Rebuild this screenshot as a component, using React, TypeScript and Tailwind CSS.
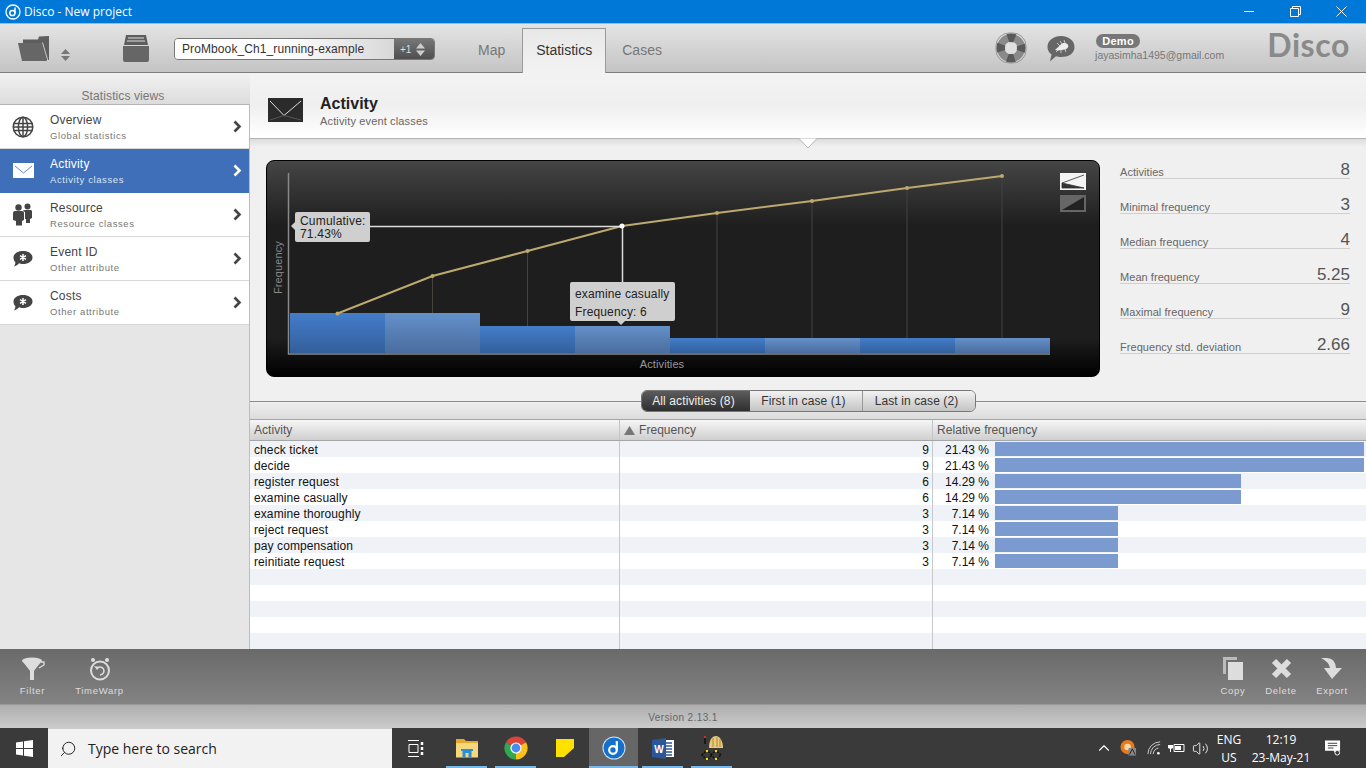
import { Search, ChevronUp, Volume2 } from "lucide-react"

const activities = [
  { name: "check ticket", freq: 9, pct: "21.43 %", bar: 369 },
  { name: "decide", freq: 9, pct: "21.43 %", bar: 369 },
  { name: "register request", freq: 6, pct: "14.29 %", bar: 246 },
  { name: "examine casually", freq: 6, pct: "14.29 %", bar: 246 },
  { name: "examine thoroughly", freq: 3, pct: "7.14 %", bar: 123 },
  { name: "reject request", freq: 3, pct: "7.14 %", bar: 123 },
  { name: "pay compensation", freq: 3, pct: "7.14 %", bar: 123 },
  { name: "reinitiate request", freq: 3, pct: "7.14 %", bar: 123 },
]

const stats = [
  ["Activities", "8"],
  ["Minimal frequency", "3"],
  ["Median frequency", "4"],
  ["Mean frequency", "5.25"],
  ["Maximal frequency", "9"],
  ["Frequency std. deviation", "2.66"],
]

const points = [
  [71.5, 153.5],
  [166.5, 116],
  [261.5, 91],
  [356, 66],
  [451, 53],
  [546, 41],
  [641, 28],
  [736, 16],
]

const bars = [
  [24, 153],
  [119, 153],
  [214, 166],
  [309, 166],
  [404, 178],
  [499, 178],
  [594, 178],
  [689, 178],
]

function DiscoLogo({ size = 16 }: { size?: number }) {
  return (
    <svg width={size} height={size} viewBox="0 0 16 16">
      <circle cx="8" cy="8" r="7" fill="none" stroke="currentColor" strokeWidth="1.3" />
      <circle cx="7.4" cy="9" r="2.6" fill="none" stroke="currentColor" strokeWidth="1.5" />
      <path d="M10 9V3.5" stroke="currentColor" strokeWidth="1.5" fill="none" />
    </svg>
  )
}

function Chevron({ color }: { color: string }) {
  return (
    <svg width="9" height="13" viewBox="0 0 9 13">
      <path d="M1.5 1.5L6.5 6.5L1.5 11.5" fill="none" stroke={color} strokeWidth="2.6" />
    </svg>
  )
}

function GlobeIcon() {
  return (
    <svg width="22" height="22" viewBox="0 0 22 22" fill="none" stroke="#444" strokeWidth="1.5">
      <circle cx="11" cy="11" r="9.8" />
      <ellipse cx="11" cy="11" rx="4.6" ry="9.8" />
      <path d="M11 1V21M1.5 7.5H20.5M1.5 14.5H20.5M1 11H21" />
    </svg>
  )
}

function MailIcon({ bg, line }: { bg: string; line: string }) {
  return (
    <svg width="21" height="15" viewBox="0 0 21 15">
      <rect width="21" height="15" fill={bg} />
      <path d="M2 3L10.5 10L19 3" fill="none" stroke={line} strokeWidth="0.8" />
    </svg>
  )
}

function PeopleIcon() {
  return (
    <svg width="20" height="23" viewBox="0 0 20 23" fill="#444">
      <circle cx="14.5" cy="3.5" r="3" />
      <path d="M10 8Q10 7 12 7H17Q19 7 19 8V15L17 16V20H13V16H12V9Z" />
      <circle cx="5.5" cy="4.5" r="3.2" />
      <path d="M0 10Q0 8 2 8H9Q11 8 11 10V17L9 18V22.5H3V18L0 17Z" />
    </svg>
  )
}

function BubbleIcon() {
  return (
    <svg width="20" height="18" viewBox="0 0 20 18">
      <path d="M10 1C15 1 19.5 3.5 19.5 7.5S15 14 10 14C8.5 14 7 13.7 6 13.3C4.5 15 3 16 .8 16.5C2 15 2.4 13.8 2.4 12C1 11 .5 9.3 .5 7.5C.5 3.5 5 1 10 1Z" fill="#444" />
      <path d="M10 4V11M7 5.7L13 9.3M13 5.7L7 9.3" stroke="#fff" strokeWidth="1.5" />
    </svg>
  )
}

function NavItem({
  title,
  sub,
  icon,
  active,
}: {
  title: string
  sub: string
  icon: React.ReactNode
  active?: boolean
}) {
  return (
    <div
      className={`h-[44px] flex items-center border-b ${
        active ? "bg-[#3e6fb8] border-[#3e6fb8]" : "bg-white border-[#d8d8d8]"
      }`}
    >
      <div className="w-[45px] pl-[1px] flex justify-center">{icon}</div>
      <div className="flex-1 pl-[5px] pt-[1px]">
        <div className={`text-[12px] leading-[15px] tracking-[0.2px] ${active ? "text-white" : "text-[#444]"}`}>{title}</div>
        <div className={`text-[9.5px] leading-[13px] mt-[1px] tracking-[0.6px] ${active ? "text-[#dbe6f5]" : "text-[#777]"}`}>{sub}</div>
      </div>
      <div className="pr-[7px]">
        <Chevron color={active ? "#fff" : "#444"} />
      </div>
    </div>
  )
}

function ToolButton({ label, icon, width }: { label: string; icon: React.ReactNode; width: string }) {
  return (
    <div className={`flex flex-col items-center ${width}`}>
      <div className="h-[28px] pt-[1px] flex items-center justify-center">{icon}</div>
      <div className="text-[9.5px] leading-[12px] mt-[3px] tracking-[0.7px] text-[#ddd]">{label}</div>
    </div>
  )
}

function TaskIcon({ children, active, underline = true }: { children: React.ReactNode; active?: boolean; underline?: boolean }) {
  return (
    <div className={`relative w-[49px] h-[40px] flex items-center justify-center ${active ? "bg-[#666]" : ""}`}>
      {children}
      {underline && <div className={`absolute bottom-0 h-[2px] bg-[#76b9ed] ${active ? "left-0 right-0" : "left-[4px] right-[4px]"}`} />}
    </div>
  )
}

export default function App() {
  return (
    <div className="w-[1366px] h-[768px] overflow-hidden flex flex-col font-['Liberation_Sans',Arial,sans-serif] bg-[#f0f0f0]">
      {/* title bar */}
      <div className="h-[24px] bg-[#0078d7] flex items-center text-white border-b border-[#9fb9d0]">
        <div className="w-[23px] flex justify-center pl-[2px]">
          <DiscoLogo />
        </div>
        <span className="text-[12px] font-['Open_Sans',sans-serif] pl-[1px]">Disco - New project</span>
        <div className="ml-auto flex items-center h-full pr-[2px]">
          <div className="w-[46px] flex justify-center">
            <svg width="11" height="11" viewBox="0 0 11 11"><path d="M0 5.5H10" stroke="#fff" /></svg>
          </div>
          <div className="w-[46px] flex justify-center">
            <svg width="11" height="11" viewBox="0 0 11 11" fill="none" stroke="#fff"><path d="M.5 2.5H8.5V10.5H.5ZM2.5 2.5V.5H10.5V8.5H8.5" /></svg>
          </div>
          <div className="w-[46px] flex justify-center">
            <svg width="11" height="11" viewBox="0 0 11 11" fill="none" stroke="#fff"><path d="M.5 .5L10.5 10.5M10.5 .5L.5 10.5" /></svg>
          </div>
        </div>
      </div>

      {/* toolbar */}
      <div className="h-[49px] flex bg-gradient-to-b from-[#e4e4e4] to-[#c4c4c4] border-b border-[#7d7d7d]">
        <div className="pl-[18px] pt-[12px]">
          <svg width="32" height="26" viewBox="0 0 32 26">
            <path d="M5 3.5H20L21 .5 31 0V24H28L5 7Z" fill="#5e5e5e" />
            <path d="M0 7H24L29 25H4Z" fill="#666" />
            <path d="M24.5 6.5L30 25" stroke="#e4e4e4" strokeWidth="0.8" fill="none" />
          </svg>
        </div>
        <div className="pl-[11px] pt-[25px]">
          <svg width="9" height="12" viewBox="0 0 9 12" fill="#777"><path d="M4.5 0L9 5H0ZM0 7H9L4.5 12Z" /></svg>
        </div>
        <div className="pl-[53px] pt-[11px]">
          <svg width="26" height="27" viewBox="0 0 26 27">
            <path d="M3 0H23L25 10H1Z" fill="#5e5e5e" />
            <path d="M5 3H21M4 6H22" stroke="#ddd" strokeWidth="1.2" />
            <path d="M0 11H26V25Q26 27 24 27H2Q0 27 0 25Z" fill="#666" />
          </svg>
        </div>
        <div className="ml-[25px] mt-[14px] w-[261px] h-[22px] flex rounded-[4px] border border-[#777] overflow-hidden">
          <div className="flex-1 bg-gradient-to-r from-white via-white to-[#d8d8d8] pl-[7px] text-[12px] leading-[20px] tracking-[0.1px] text-[#333]">
            ProMbook_Ch1_running-example
          </div>
          <div className="w-[40px] bg-gradient-to-b from-[#777] to-[#4f4f4f] flex items-center pl-[6px] gap-[5px] text-[10px] text-[#ddd]">
            +1
            <svg width="9" height="13" viewBox="0 0 9 13" fill="#ccc"><path d="M4.5 0L9 5.5H0ZM0 7.5H9L4.5 13Z" /></svg>
          </div>
        </div>
        <div className="ml-[43px] pt-[18px] text-[14px] leading-[16px] text-[#777]">Map</div>
        <div className="ml-[17px] mt-[4px] w-[84px] h-[45px] border-x border-t border-[#9a9a9a] pt-[13px] text-center text-[14px] leading-[16px] text-[#333] bg-gradient-to-b from-[#e8e8e8] to-[#f2f2f2]">
          Statistics
        </div>
        <div className="ml-[16px] pt-[18px] text-[14px] leading-[16px] text-[#777]">Cases</div>

        <div className="ml-auto flex">
          <div className="pt-[8px]">
            <svg width="32" height="32" viewBox="0 0 32 32">
              <rect x="1" y="1" width="30" height="30" rx="13" fill="none" stroke="#999" />
              <circle cx="16" cy="16" r="7" fill="#e0e0e0" />
              <circle cx="16" cy="16" r="10.25" fill="none" stroke="#8a8a8a" strokeWidth="7.5" />
              <circle cx="16" cy="16" r="10.25" fill="none" stroke="#5a5a5a" strokeWidth="8.5" strokeDasharray="7 9.1" strokeDashoffset="3.5" />
            </svg>
          </div>
          <div className="pl-[20px] pt-[11px]">
            <svg width="28" height="28" viewBox="0 0 28 28">
              <path d="M14 1C21 1 27.5 5 27.5 12S21 22 14 22C12 22 10.5 21.8 9 21.3L3 26.5 4.5 19.5C2 17.5 .5 15 .5 12 .5 5 7 1 14 1Z" fill="#666" />
              <path d="M8 15L15 8.5C17 7.5 20 8 21 10S20 14 18 14.5L11 15.5Z" fill="#eee" />
              <path d="M13 6L15 9M17 5L18 8M10 8L13 11M18 14L19 17M14 15L14 18M9 17L11 15" stroke="#eee" strokeWidth="0.7" />
            </svg>
          </div>
          <div className="pl-[21px] pt-[10px]">
            <div className="w-[44px] h-[14px] rounded-full bg-[#777] text-white text-[11px] leading-[14px] font-bold text-center tracking-[0.3px]">Demo</div>
            <div className="text-[10.5px] leading-[14px] -ml-[1px] text-[#777]">jayasimha1495@gmail.com</div>
          </div>
          <div className="pl-[43px] pr-[16px] pt-[3px] text-[32px] leading-[36px] font-bold font-['Lato',sans-serif] text-[#8a8a8a] tracking-[0.6px]">Disco</div>
        </div>
      </div>

      {/* body */}
      <div className="h-[576px] flex">
        <aside className="w-[250px] flex flex-col bg-[#e6e6e6]">
          <div className="h-[32px] bg-gradient-to-b from-[#f2f2f2] to-[#dcdcdc] border-b border-[#b5b5b5] pt-[16px] text-center text-[12px] leading-[14px] tracking-[0.1px] text-[#777] pr-[4px]">
            Statistics views
          </div>
          <div className="flex-1 border-r border-[#bdbdbd]">
            <NavItem title="Overview" sub="Global statistics" icon={<GlobeIcon />} />
            <NavItem title="Activity" sub="Activity classes" icon={<MailIcon bg="#fff" line="#3e6fb8" />} active />
            <NavItem title="Resource" sub="Resource classes" icon={<PeopleIcon />} />
            <NavItem title="Event ID" sub="Other attribute" icon={<BubbleIcon />} />
            <NavItem title="Costs" sub="Other attribute" icon={<BubbleIcon />} />
          </div>
        </aside>

        <main className="flex-1 flex flex-col min-w-0">
          <div className="h-[66px] bg-gradient-to-b from-[#f3f3f3] via-[#efefef] to-white border-b border-[#b4b4b4] flex items-start pl-[18px] pt-[25px]">
            <svg width="35" height="24" viewBox="0 0 35 24">
              <rect width="35" height="24" fill="#2b2b2b" />
              <path d="M2 3L16 17.5L33 3" fill="none" stroke="#ddd" strokeWidth="1" />
              <path d="M16 17.5L2 22M16 17.5L33 22" fill="none" stroke="#666" strokeWidth="0.7" />
            </svg>
            <div className="pl-[17px] -mt-[4px]">
              <div className="text-[16px] leading-[20px] font-bold text-[#222]">Activity</div>
              <div className="text-[11px] leading-[14px] tracking-[0.15px] text-[#666]">Activity event classes</div>
            </div>
          </div>

          <div className="relative h-[251px] bg-gradient-to-b from-[#dcdcdc] via-[#f0f0f0] via-[3%] to-[#f0f0f0] flex pl-[16px] pt-[21px]">
            <svg className="absolute -top-[1px] left-[549px]" width="18" height="11" viewBox="0 0 18 11">
              <path d="M0 .5L9 10L18 .5" fill="#fff" stroke="#b4b4b4" />
            </svg>

            {/* chart */}
            <div className="relative w-[834px] h-[217px] rounded-[8px] border border-black bg-[linear-gradient(#454545_0,#1e1e1e_30%,#1e1e1e_82%,#000_100%)] overflow-hidden">
              <svg className="absolute -left-[1px] -top-[1px]" width="834" height="217" viewBox="0 0 834 217">
                <defs>
                  <linearGradient id="barDark" x1="0" y1="0" x2="0" y2="1">
                    <stop offset="0" stopColor="#437dc9" />
                    <stop offset="1" stopColor="#335f9c" />
                  </linearGradient>
                  <linearGradient id="barLight" x1="0" y1="0" x2="0" y2="1">
                    <stop offset="0" stopColor="#6490ca" />
                    <stop offset="1" stopColor="#4a6d9e" />
                  </linearGradient>
                </defs>
                {points.map(([x, y], i) =>
                  i > 0 && i !== 3 ? (
                    <line key={x} x1={x} y1={y} x2={x} y2={bars[i][1]} stroke="#45433a" strokeWidth="1" />
                  ) : null
                )}
                {bars.map(([x, y], i) => (
                  <rect key={x} x={x} y={y} width="95" height={193 - y} fill={i % 2 ? "url(#barLight)" : "url(#barDark)"} />
                ))}
                <path d="M22.5 13V194H784" fill="none" stroke="#8a8a8a" strokeWidth="1.5" />
                <polyline points={points.map((p) => p.join(",")).join(" ")} fill="none" stroke="#bda96f" strokeWidth="2" />
                {points.map(([x, y]) => (
                  <circle key={x} cx={x} cy={y} r="2" fill="#bda96f" />
                ))}
                <path d="M104 66.5H356.5V124" fill="none" stroke="#ddd" strokeWidth="1.5" />
                <circle cx="356" cy="66" r="2.5" fill="#fff" />
                <text x="396" y="208" textAnchor="middle" fontSize="11" fill="#999" letterSpacing="0.1">Activities</text>
                <text x="0" y="0" transform="translate(16,134) rotate(-90)" fontSize="11" fill="#888" letterSpacing="0.1">Frequency</text>
                {/* curve mode buttons */}
                <rect x="794" y="13" width="26" height="17" fill="#f4f4f4" />
                <path d="M796 23L818 15M796 23L818 28H796Z" fill="#333" stroke="#333" strokeWidth="0.8" />
                <rect x="794" y="35" width="26" height="17" fill="#666" />
                <path d="M796 50L818 37V50Z" fill="#222" />
              </svg>

              <div className="absolute left-[28px] top-[51px] w-[75px] h-[30px] rounded-[2px] bg-[#cfcfcf] px-[5px] pt-[3px] text-[12px] leading-[13px] tracking-[0.2px] text-[#222]">
                Cumulative:
                <br />
                71.43%
                <div className="absolute -left-[4px] top-[10px] w-0 h-0 border-y-[4px] border-y-transparent border-r-[4px] border-r-[#cfcfcf]" />
              </div>

              <div className="absolute left-[303px] top-[121px] w-[105px] h-[39px] rounded-[2px] bg-[#cfcfcf] px-[5px] pt-[3px] text-[12px] leading-[18px] tracking-[0.15px] text-[#222] whitespace-nowrap">
                examine casually
                <br />
                Frequency: 6
                <div className="absolute left-[47px] -bottom-[4px] w-0 h-0 border-x-[4px] border-x-transparent border-t-[4px] border-t-[#cfcfcf]" />
              </div>
            </div>

            {/* stats */}
            <div className="w-[230px] ml-[20px] -mt-[16px] flex flex-col">
              {stats.map(([label, value]) => (
                <div key={label} className="h-[35px] border-b border-[#cfcfcf] flex items-end justify-between">
                  <span className="text-[11px] leading-[12px] tracking-[0.05px] text-[#666]">{label}</span>
                  <span className="text-[17px] leading-[17px] text-[#555]">{value}</span>
                </div>
              ))}
            </div>
          </div>

          {/* view tabs */}
          <div className="h-[29px] flex bg-[linear-gradient(#f0f0f0_0,#f0f0f0_11px,#eeeeee_12px,#dcdcdc_100%)]">
            <div className="flex-1 h-px mt-[11px] bg-[#8c8c8c]" />
            <div className="w-[335px] h-[22px] flex rounded-[6px] border border-[#777] overflow-hidden text-[12px] leading-[20px] text-center tracking-[0.1px]">
              <div className="w-[108px] pr-[4px] bg-gradient-to-b from-[#5c5c5c] to-[#2f2f2f] text-[#eee]">All activities (8)</div>
              <div className="w-[113px] pr-[4px] bg-gradient-to-b from-[#f2f2f2] to-[#c4c4c4] text-[#333] border-r border-[#999]">First in case (1)</div>
              <div className="flex-1 pr-[4px] bg-gradient-to-b from-[#f2f2f2] to-[#c4c4c4] text-[#333]">Last in case (2)</div>
            </div>
            <div className="flex-1 h-px mt-[11px] bg-[#8c8c8c]" />
          </div>

          {/* table */}
          <div className="h-[22px] grid grid-cols-[370px_313px_1fr] bg-gradient-to-b from-[#f6f6f6] to-[#cfcfcf] border-y border-[#a6a6a6] text-[12px] leading-[20px] text-[#555] tracking-[0.05px]">
            <div className="pl-[4px] border-r border-[#c4c4c4]">Activity</div>
            <div className="pl-[4px] border-r border-[#c4c4c4] flex items-center gap-[4px]">
              <svg width="11" height="9" viewBox="0 0 11 9" fill="#777"><path d="M5.5 0L11 9H0Z" /></svg>
              Frequency
            </div>
            <div className="pl-[4px]">Relative frequency</div>
          </div>
          <div className="flex-1 flex flex-col overflow-hidden">
            {Array.from({ length: 13 }).map((_, i) => {
              const row = activities[i]
              return (
                <div
                  key={i}
                  className={`h-[16px] shrink-0 grid grid-cols-[370px_313px_1fr] grid-rows-[16px] text-[12px] leading-[18px] text-[#111] ${
                    i % 2 === 0 ? "bg-[#eff3f8]" : "bg-white"
                  }`}
                >
                  <div className="pl-[4px] tracking-[0.1px] border-r border-[#c8c8c8] whitespace-nowrap">{row?.name}</div>
                  <div className="pr-[3px] text-right border-r border-[#c8c8c8]">{row?.freq}</div>
                  <div className="flex items-center">
                    {row && (
                      <>
                        <span className="w-[56px] self-start text-right">{row.pct}</span>
                        <div className="ml-[6px] h-[14px] bg-[#7b9ad0]" style={{ width: row.bar }} />
                      </>
                    )}
                  </div>
                </div>
              )
            })}
          </div>
        </main>
      </div>

      {/* bottom actions */}
      <div className="h-[56px] bg-gradient-to-b from-[#6a6a6a] to-[#838383] border-b border-[#999] flex pl-[10px] pr-[7px] pt-[5px]">
        <ToolButton
          width="w-[45px]"
          label="Filter"
          icon={
            <svg width="24" height="24" viewBox="0 0 24 24" fill="#ddd">
              <ellipse cx="11" cy="3.5" rx="10" ry="3" />
              <path d="M1 4Q7 11 9 14V23H13V14Q15 11 21 4Z" />
              <path d="M20 5H23V8L18 11" fill="none" stroke="#ddd" strokeWidth="1.3" />
            </svg>
          }
        />
        <ToolButton
          width="w-[89px]"
          label="TimeWarp"
          icon={
            <svg width="22" height="24" viewBox="0 0 22 24" fill="none" stroke="#ddd">
              <circle cx="11" cy="13.5" r="9" strokeWidth="2" />
              <path d="M7.5 12A4 4 0 1 1 11 18" strokeWidth="1.5" />
              <path d="M5 9L8 13L10.5 10Z" fill="#ddd" stroke="none" />
              <circle cx="4" cy="3" r="2" fill="#ddd" stroke="none" />
              <circle cx="18" cy="3" r="2" fill="#ddd" stroke="none" />
            </svg>
          }
        />
        <div className="ml-auto flex">
          <ToolButton
            width="w-[48px]"
            label="Copy"
            icon={
              <svg width="20" height="23" viewBox="0 0 20 23" fill="#ddd">
                <path d="M0 0H14V3H3V17H0Z" fill="#bbb" />
                <rect x="5" y="5" width="15" height="18" />
              </svg>
            }
          />
          <ToolButton
            width="w-[48px]"
            label="Delete"
            icon={
              <svg width="21" height="21" viewBox="0 0 21 21" fill="none" stroke="#ddd" strokeWidth="6">
                <path d="M3 3L18 18M18 3L3 18" />
              </svg>
            }
          />
          <ToolButton
            width="w-[54px]"
            label="Export"
            icon={
              <svg width="22" height="22" viewBox="0 0 22 22" fill="#ddd">
                <path d="M0 0H6Q14 0 15 10H21L11 21L3 10H9Q8 4 0 0Z" />
              </svg>
            }
          />
        </div>
      </div>

      {/* version bar */}
      <div className="h-[23px] bg-gradient-to-b from-[#aeaeae] to-[#cbcbcb] text-center text-[10px] leading-[25px] tracking-[0.4px] text-[#666]">
        Version 2.13.1
      </div>

      {/* taskbar */}
      <div className="h-[40px] bg-[#3a3a3a] flex text-white">
        <div className="w-[48px] flex items-center justify-center">
          <svg width="17" height="17" viewBox="0 0 17 17" fill="#fff">
            <path d="M0 2.4L7 1.4V8H0ZM8 1.3L17 0V8H8ZM0 9H7V15.6L0 14.6ZM8 9H17V17L8 15.7Z" />
          </svg>
        </div>
        <div className="w-[344px] bg-[#f2f2f2] border-t border-[#ccc] flex items-center pl-[11px] text-[#222]">
          <Search size={18} strokeWidth={1.3} className="-scale-x-100 text-[#222]" />
          <span className="pl-[11px] text-[14px] font-['Open_Sans',sans-serif]">Type here to search</span>
        </div>
        <div className="w-[49px] flex items-center justify-center">
          <svg width="17" height="17" viewBox="0 0 17 17" fill="none" stroke="#fff">
            <path d="M0 .5H11M0 16.5H11M1 4.5H10V12.5H1Z" />
            <path d="M14 2V5M14 7V10M14 12V15" strokeWidth="2.5" />
          </svg>
        </div>
        <div className="w-[1px]" />
        <TaskIcon>
          <svg width="22" height="19" viewBox="0 0 22 19">
            <path d="M0 0H8L10 2H22V18H0Z" fill="#e8a92a" />
            <path d="M0 4H22V18.5H0Z" fill="#f5d77e" />
            <path d="M5 10H17V12H15.5V18.5H12.5V14H9.5V18.5H6.5V12H5Z" fill="#2a8fd6" />
          </svg>
        </TaskIcon>
        <TaskIcon>
          <svg width="24" height="24" viewBox="0 0 24 24">
            <path d="M12 12L2 6.25A11.5 11.5 0 0 1 22 6.25Z" fill="#db4437" />
            <path d="M12 12L12 23.5A11.5 11.5 0 0 1 2 6.25Z" fill="#2fa84f" />
            <path d="M12 12L22 6.25A11.5 11.5 0 0 1 12 23.5Z" fill="#f8c21a" />
            <circle cx="12" cy="12" r="5.6" fill="#fff" />
            <circle cx="12" cy="12" r="4.4" fill="#4a8bf0" />
          </svg>
        </TaskIcon>
        <TaskIcon underline={false}>
          <svg width="18" height="18" viewBox="0 0 18 18">
            <path d="M0 0H18V18H0Z" fill="#ffe100" />
            <path d="M18 9V18H8Z" fill="#3a3a3a" />
          </svg>
        </TaskIcon>
        <TaskIcon active>
          <svg width="24" height="24" viewBox="0 0 24 24">
            <circle cx="12" cy="12" r="11.5" fill="#d5e2f2" />
            <circle cx="12" cy="12" r="10.5" fill="#1570cc" />
            <circle cx="11" cy="14" r="3.8" fill="none" stroke="#fff" strokeWidth="2.2" />
            <path d="M14.8 14V5" stroke="#fff" strokeWidth="2.2" />
          </svg>
        </TaskIcon>
        <TaskIcon>
          <svg width="22" height="21" viewBox="0 0 22 21">
            <rect x="8" y="2" width="14" height="17" fill="#fff" />
            <path d="M14 5H20M14 8H20M14 11H20M14 14H20M14 17H20" stroke="#2b579a" strokeWidth="1.5" />
            <path d="M0 2L14 0V21L0 19Z" fill="#2b579a" />
            <text x="7" y="14.5" textAnchor="middle" fontSize="10" fontWeight="bold" fill="#fff">W</text>
          </svg>
        </TaskIcon>
        <TaskIcon>
          <svg width="24" height="26" viewBox="0 0 24 26">
            <path d="M9 13C9 5 12 1 16 1S23 6 23 13Z" fill="#e8c97a" />
            <path d="M13 3V12M17 2V12M20 4V12" stroke="#a88a3f" strokeWidth="1" />
            <path d="M5 1V9" stroke="#111" strokeWidth="1.5" />
            <circle cx="5" cy="2" r="1.2" fill="#c33" />
            <path d="M2 20L7 15L12 20L7 25ZM11 20L16 15L21 20L16 25Z" fill="none" stroke="#111" strokeWidth="1.5" strokeDasharray="2 1" />
            <circle cx="7" cy="16" r="1.2" fill="#fd0" />
            <circle cx="16" cy="16" r="1.2" fill="#fd0" />
            <circle cx="7" cy="24" r="1.2" fill="#fd0" />
            <circle cx="16" cy="24" r="1.2" fill="#fd0" />
          </svg>
        </TaskIcon>

        <div className="ml-auto flex items-center font-['Open_Sans',sans-serif] text-[12px] leading-[18px]">
          <ChevronUp size={18} strokeWidth={1.5} className="mr-[7px]" />
          <div className="w-[27px]">
            <svg width="17" height="18" viewBox="0 0 18 18">
              <circle cx="8" cy="8" r="7.5" fill="#e8791c" />
              <circle cx="8" cy="8" r="3.5" fill="#f7d6a8" />
              <path d="M9 9H17V17H9Z" fill="#888" />
              <path d="M10 16L13 10L16 16" fill="none" stroke="#222" />
            </svg>
          </div>
          <div className="w-[21px]">
            <svg width="14" height="14" viewBox="0 0 16 16" fill="none" stroke="#ddd">
              <path d="M1 15A14 14 0 0 1 15 1M4 15A11 11 0 0 1 15 4" strokeWidth="1" />
              <path d="M7 15A8 8 0 0 1 13 8" strokeWidth="1" />
              <circle cx="13" cy="14" r="1.5" fill="#fff" stroke="none" />
            </svg>
          </div>
          <div className="w-[24px]">
            <svg width="17" height="12" viewBox="0 0 17 12" fill="#fff">
              <path d="M1 0V3M4 0V3M0 3H5V6L3 7V10H2V7L0 6Z" />
              <path d="M6 2.5H16V9.5H6Z" fill="none" stroke="#fff" />
              <rect x="7" y="4" width="6" height="4" />
            </svg>
          </div>
          <div className="w-[22px]">
            <Volume2 size={17} strokeWidth={1.2} />
          </div>
          <div className="w-[30px] pt-[1px] text-center">
            <div>ENG</div>
            <div>US</div>
          </div>
          <div className="w-[74px] pt-[1px] text-center">
            <div>12:19</div>
            <div>23-May-21</div>
          </div>
          <div className="w-[23px] pl-[7px]">
            <svg width="16" height="16" viewBox="0 0 17 16">
              <path d="M0 0H16V11H12V14L9 11H0Z" fill="#fff" />
              <path d="M3 3H13M3 5.5H13M3 8H9" stroke="#3a3a3a" />
              <circle cx="13" cy="13" r="2.5" fill="#3a3a3a" stroke="#fff" />
            </svg>
          </div>
          <div className="w-[25px]" />
        </div>
      </div>
    </div>
  )
}
